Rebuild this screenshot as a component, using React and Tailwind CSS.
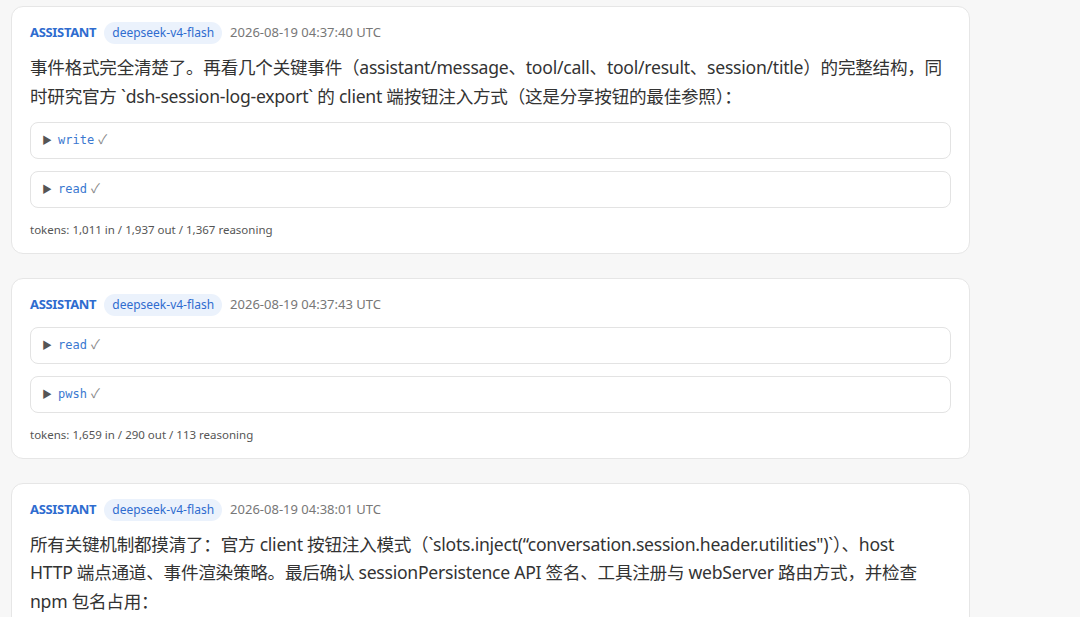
import React from "react";

const messages = [
  {
    time: "2026-08-19 04:37:40 UTC",
    text: "事件格式完全清楚了。再看几个关键事件（assistant/message、tool/call、tool/result、session/title）的完整结构，同\n时研究官方 `dsh-session-log-export` 的 client 端按钮注入方式（这是分享按钮的最佳参照）：",
    tools: ["write", "read"],
    tokens: "tokens: 1,011 in / 1,937 out / 1,367 reasoning",
  },
  {
    time: "2026-08-19 04:37:43 UTC",
    text: null,
    tools: ["read", "pwsh"],
    tokens: "tokens: 1,659 in / 290 out / 113 reasoning",
  },
  {
    time: "2026-08-19 04:38:01 UTC",
    text: "所有关键机制都摸清了：官方 client 按钮注入模式（`slots.inject(“conversation.session.header.utilities\")`）、host\nHTTP 端点通道、事件渲染策略。最后确认 sessionPersistence API 签名、工具注册与 webServer 路由方式，并检查\nnpm 包名占用：",
    tools: [],
    tokens: null,
  },
];

function ToolRow({ name }) {
  return (
    <div className="h-[37px] flex items-center gap-[6px] px-[11px] border border-[#e3e3e3] rounded-lg bg-white">
      <span className="text-[10px] text-[#555]">▶</span>
      <span className="font-['DejaVu_Sans_Mono',monospace] text-[12px] text-[#3a78d0]">
        {name}
      </span>
      <span className="text-[13px] text-[#888] -ml-[2px]">✓</span>
    </div>
  );
}

function MessageCard({ msg }) {
  return (
    <div className="bg-white border border-[#e6e6e6] rounded-xl pt-[15px] pb-[13px] px-[18px] flex flex-col">
      <div className="h-[22px] flex items-center gap-2">
        <span className="text-[13px] font-bold text-[#2f6ccf] tracking-tight">ASSISTANT</span>
        <span className="h-[22px] flex items-center px-2 rounded-full bg-[#ebf2fc] text-[12px] text-[#2f6ccf]">
          deepseek-v4-flash
        </span>
        <span className="text-[13px] text-[#777]">{msg.time}</span>
      </div>
      {msg.text && (
        <p className="mt-[9px] whitespace-pre-line text-[17.6px] leading-[28.8px] tracking-[-0.26px] text-[#333]">
          {msg.text}
        </p>
      )}
      {msg.tools.length > 0 && (
        <div className="flex flex-col gap-3 mt-[11px]">
          {msg.tools.map((t, i) => (
            <ToolRow key={i} name={t} />
          ))}
        </div>
      )}
      {msg.tokens && (
        <div className="mt-3 text-[11.5px] leading-5 text-[#555]">{msg.tokens}</div>
      )}
    </div>
  );
}

export default function App() {
  return (
    <div className="min-h-screen bg-[#f7f7f7] font-['Noto_Sans','Noto_Sans_CJK_SC',sans-serif] pt-[6px] pl-[11px] w-[1080px] h-[617px] overflow-hidden">
      <div className="w-[959px] flex flex-col gap-6">
        {messages.map((m, i) => (
          <MessageCard key={i} msg={m} />
        ))}
      </div>
    </div>
  );
}
